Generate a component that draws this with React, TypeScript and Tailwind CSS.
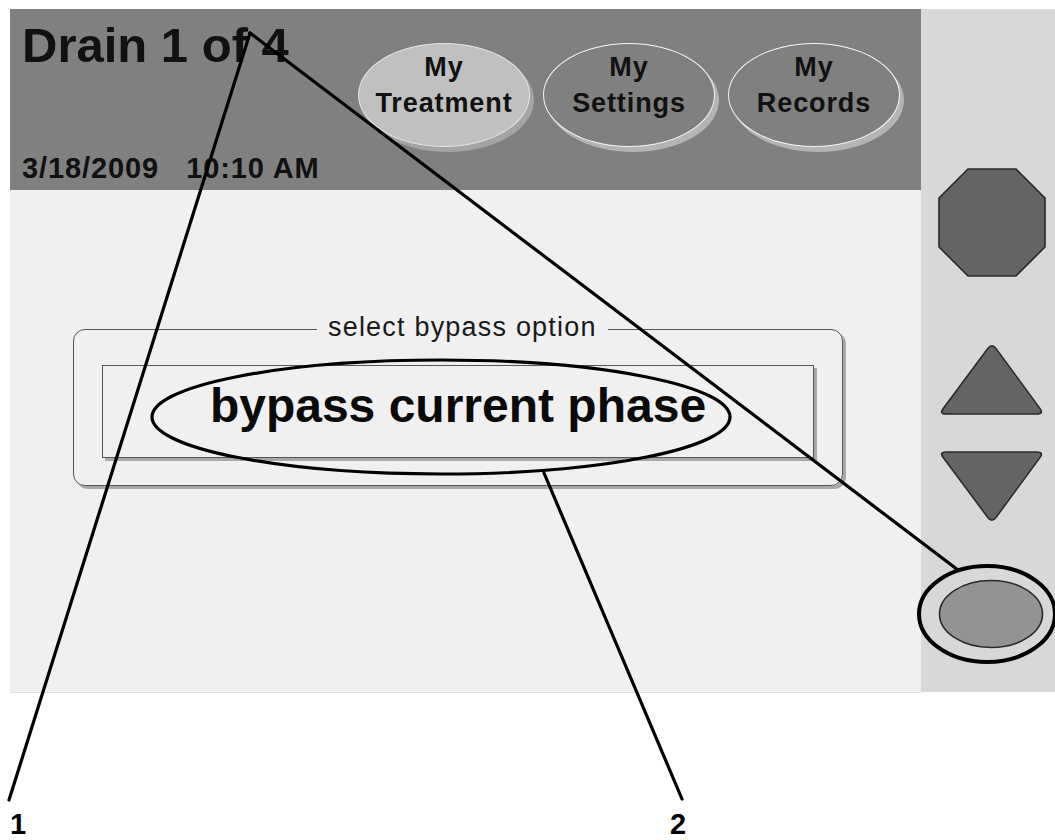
import React from "react";

const font = { fontFamily: '"Liberation Sans", Arial, sans-serif' };

function PillButton({ label, active }: { label: string; active?: boolean }) {
  return (
    <div
      className={
        "flex h-[104px] w-[172px] flex-col items-center rounded-[50%] border pt-[5px] text-[27px] font-bold leading-[36px] tracking-[0.9px] text-[#111] " +
        (active
          ? "border-[#e4e4e4] bg-[#c0c0c0] shadow-[4px_5px_0_0_#a4a4a4]"
          : "border-[#f4f4f4] bg-[#808080] shadow-[4px_5px_0_0_#b4b4b4]")
      }
    >
      <span>My</span>
      <span>{label}</span>
    </div>
  );
}

export default function App() {
  return (
    <div className="relative h-[840px] w-[1055px] overflow-hidden bg-white" style={font}>
      <div className="flex pl-[10px] pt-[9px]">
        {/* left column */}
        <div className="flex w-[911px] flex-col">
          {/* header */}
          <div className="flex h-[181px] bg-[#808080] pl-[12px]">
            <div className="flex w-[336px] flex-col">
              <div className="mt-[11.5px] text-[49px] font-bold leading-none text-[#111]">Drain 1 of 4</div>
              <div className="mt-[84px] flex text-[29px] font-bold leading-none tracking-[0.9px] text-[#111]">
                <span>3/18/2009</span>
                <span className="ml-[27px]">10:10 AM</span>
              </div>
            </div>
            <div className="flex gap-[13px] pt-[34px]">
              <PillButton label="Treatment" active />
              <PillButton label="Settings" />
              <PillButton label="Records" />
            </div>
          </div>
          {/* main */}
          <div className="h-[502px] bg-[#f0f0f0] pl-[63px] pt-[139px] shadow-[0_1px_0_0_#dcdcdc]">
            <div className="relative w-[770px] rounded-[12px] border border-[#555] px-[28px] pb-[27px] pt-[35px] shadow-[3px_3px_0_0_#a8a8a8]">
              <span className="absolute left-[243px] top-[-16px] bg-[#f0f0f0] px-[11px] text-[27px] leading-none tracking-[1.2px] text-[#1a1a1a]">
                select bypass option
              </span>
              <div className="h-[93px] border border-[#555] pt-[16px] text-center text-[48px] font-bold leading-none text-[#0a0a0a] shadow-[3px_3px_0_0_#a8a8a8]">
                bypass current phase
              </div>
            </div>
          </div>
        </div>
        {/* right panel */}
        <div className="flex h-[683px] w-[134px] flex-col bg-[#d8d8d8] pl-[17px] pt-[159px]">
          <svg width="108" height="109" viewBox="0 0 108 109">
            <polygon
              points="30,1 78,1 107,30 107,79 78,108 30,108 1,79 1,30"
              fill="#646464"
              stroke="#2a2a2a"
              strokeWidth="1.6"
              strokeLinejoin="round"
            />
          </svg>
          <svg className="mt-[65px]" width="107" height="74" viewBox="0 0 107 74">
            <path
              d="M 49.8 6.6 Q 54 1 58.1 6.6 L 101.9 66.4 Q 106 72 99 72 L 8 72 Q 1 72 5.2 66.4 Z"
              fill="#646464"
              stroke="#2a2a2a"
              strokeWidth="1.6"
            />
          </svg>
          <svg className="mt-[35px]" width="107" height="74" viewBox="0 0 107 74">
            <path
              d="M 49.8 66.4 Q 54 72 58.1 66.4 L 101.9 6.6 Q 106 1 99 1 L 8 1 Q 1 1 5.2 6.6 Z"
              fill="#646464"
              stroke="#2a2a2a"
              strokeWidth="1.6"
            />
          </svg>
          <svg className="mt-[54px]" width="106" height="70" viewBox="0 0 106 70">
            <ellipse cx="53" cy="35" rx="51.5" ry="33.5" fill="#939393" stroke="#2a2a2a" strokeWidth="1.6" />
          </svg>
        </div>
      </div>

      {/* annotation overlay */}
      <svg
        className="pointer-events-none absolute left-0 top-0"
        width="1055"
        height="840"
        viewBox="0 0 1055 840"
      >
        <g stroke="#000" strokeWidth="3.2" fill="none" strokeLinecap="round">
          <line x1="250" y1="33" x2="9" y2="800" />
          <line x1="250" y1="33" x2="958" y2="570" />
          <line x1="544" y1="473" x2="682" y2="799" />
          <ellipse cx="441" cy="417" rx="289" ry="57" />
          <ellipse cx="987" cy="614" rx="68" ry="48" strokeWidth="4" />
        </g>
        <text x="10" y="834" fontSize="29" fontWeight="bold" fill="#000" style={font}>
          1
        </text>
        <text x="670" y="834" fontSize="29" fontWeight="bold" fill="#000" style={font}>
          2
        </text>
      </svg>
    </div>
  );
}
